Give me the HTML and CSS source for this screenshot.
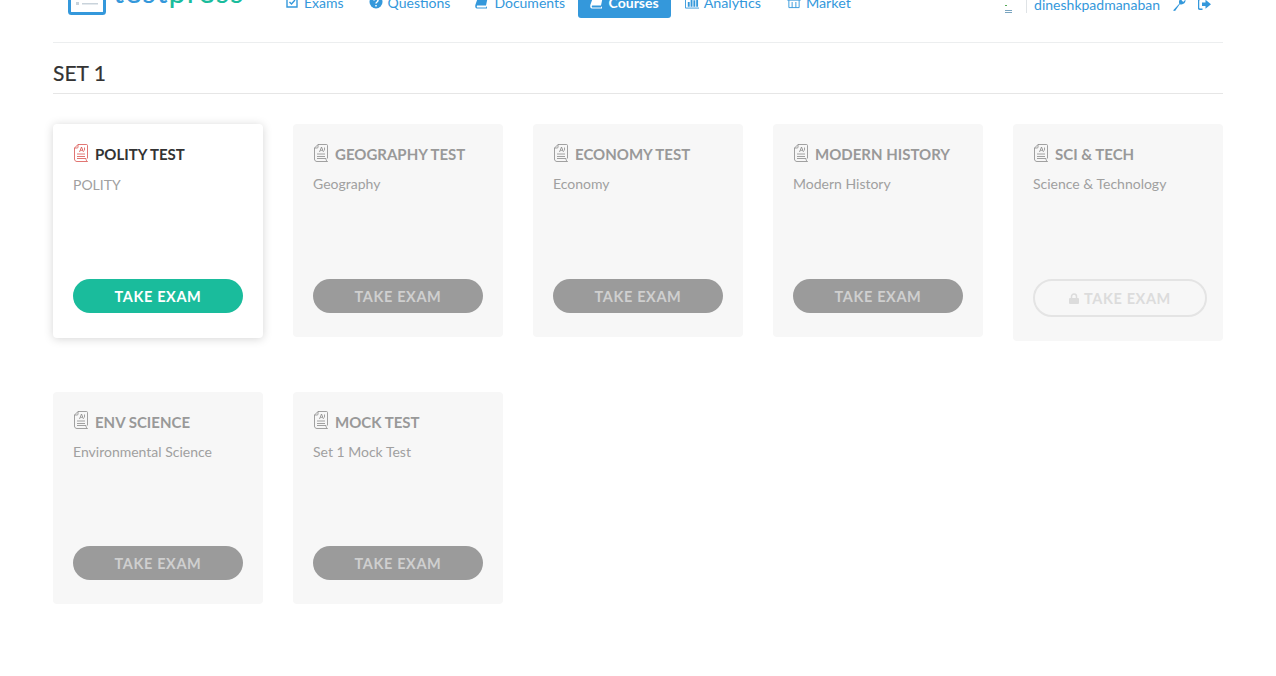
FILE: index.html
```html
<!DOCTYPE html>
<html lang="en">
<head>
<meta charset="utf-8">
<title>Testpress - Set 1</title>
<link rel="stylesheet" href="styles.css">
</head>
<body>
<svg class="defs" width="0" height="0" aria-hidden="true">
  <defs>
    <symbol id="doc" viewBox="0 0 16 18">
      <path d="M5 .5h8.500c.6 0 1 .4 1 1v13M5 .5 1.500 4v11c0 1.500 1 2.500 2.500 2.500h10.500c-1-.5-1.500-1.500-1.500-3H4M1.500 4H4.200c.5 0 .8-.3.8-.8V.5" fill="none" stroke="currentColor" stroke-width=".8"/>
      <path d="M6.500 8 8.500 3l2 5M7.300 6.300h2.500M11.500 3.500v3M4 10h8M4 12.500h8" fill="none" stroke="currentColor" stroke-width=".8"/>
    </symbol>
  </defs>
</svg>
<div class="page">
  <header class="topbar">
    <a class="logo">
      <svg class="logo-mark" viewBox="0 0 38 24" width="38" height="24"><rect x="1.500" y="-10" width="35" height="32.500" rx="2" fill="#fff" stroke="#3498db" stroke-width="3"/><rect x="8" y="11" width="3" height="3" fill="#c9d3db"/><rect x="14" y="12" width="16" height="1.500" fill="#c9d3db"/></svg>
      <span class="logo-text"><span class="logo-test">test</span><span class="logo-press">press</span></span>
    </a>
    <nav class="nav">
      <a class="nav-item"><svg class="nav-icon" viewBox="0 0 14 14"><path d="M2 2h10v10H2zM4.500 7l2 2 3.500-4" fill="none" stroke="currentColor" stroke-width="1.400"/></svg>Exams</a>
      <a class="nav-item"><svg class="nav-icon" viewBox="0 0 14 14"><circle cx="7" cy="7" r="6.500" fill="currentColor"/><path d="M5 5.500C5 3.500 9 3.500 9 5.500 9 7 7 7 7 8.500M7 10v1.500" fill="none" stroke="#fff" stroke-width="1.500"/></svg>Questions</a>
      <a class="nav-item"><svg class="nav-icon" viewBox="0 0 14 14"><path d="M3.500 1H13l-2 9.500H2.500C1.500 10.500 1.500 12.500 2.500 12.500H11L12 11V13.500H2C0 13.500 0 11 .5 9.500Z" fill="currentColor"/></svg>Documents</a>
      <a class="nav-item nav-active"><svg class="nav-icon" viewBox="0 0 14 14"><path d="M3.500 1H13l-2 9.500H2.500C1.500 10.500 1.500 12.500 2.500 12.500H11L12 11V13.500H2C0 13.500 0 11 .5 9.500Z" fill="currentColor"/></svg>Courses</a>
      <a class="nav-item nav-wide"><svg class="nav-icon" viewBox="0 0 15 14"><path d="M.5 1v12.500H15" fill="none" stroke="currentColor"/><path d="M3 7h2v5H3zM6 3h2v9H6zM9 5h2v7H9zM12 2h2v10h-2z" fill="currentColor"/></svg>Analytics</a>
      <a class="nav-item nav-wide"><svg class="nav-icon" viewBox="0 0 15 14"><path d="M2 1.500h11l1.500 3.500h-14zM2 5v8h11V5M5.500 7v6M9.500 7v6" fill="none" stroke="currentColor"/></svg>Market</a>
    </nav>
    <div class="user">
      <span class="avatar"><i class="av-a"></i><i class="av-b"></i><i class="av-c"></i></span>
      <a class="user-name">dineshkpadmanaban</a>
      <svg class="user-icon" viewBox="1 1 12.500 12.500"><path d="M1 13 7 6.500C6 3.500 8 .5 11.500 1L9.200 3.200 10.800 4.800 13 2.500C13.500 6 10.500 8 7.500 7L3 13.500Z" fill="currentColor"/></svg>
      <svg class="user-icon" viewBox="0.500 1 13 12.500"><path d="M5 2H2.500C1.500 2 1 2.500 1 3.500v7C1 11.500 1.500 12 2.500 12H5" fill="none" stroke="currentColor" stroke-width="1.500"/><path d="M4.500 5.200H8V2.500L13.500 7 8 11.500V8.800H4.500Z" fill="currentColor"/></svg>
    </div>
  </header>

  <h1 class="set-title">SET 1</h1>

  <main class="cards">
    <article class="card card-active">
      <h2 class="card-title"><svg class="doc-icon"><use href="#doc"/></svg>POLITY TEST</h2>
      <p class="card-sub">POLITY</p>
      <a class="btn btn-primary">TAKE EXAM</a>
    </article>
    <article class="card">
      <h2 class="card-title"><svg class="doc-icon"><use href="#doc"/></svg>GEOGRAPHY TEST</h2>
      <p class="card-sub">Geography</p>
      <a class="btn">TAKE EXAM</a>
    </article>
    <article class="card">
      <h2 class="card-title"><svg class="doc-icon"><use href="#doc"/></svg>ECONOMY TEST</h2>
      <p class="card-sub">Economy</p>
      <a class="btn">TAKE EXAM</a>
    </article>
    <article class="card">
      <h2 class="card-title"><svg class="doc-icon"><use href="#doc"/></svg>MODERN HISTORY</h2>
      <p class="card-sub">Modern History</p>
      <a class="btn">TAKE EXAM</a>
    </article>
    <article class="card">
      <h2 class="card-title"><svg class="doc-icon"><use href="#doc"/></svg>SCI &amp; TECH</h2>
      <p class="card-sub">Science &amp; Technology</p>
      <a class="btn btn-locked"><svg class="lock" viewBox="0 0 10 11"><path d="M2.500 5V3.500a2.500 2.500 0 0 1 5 0V5" fill="none" stroke="currentColor" stroke-width="1.500"/><rect y="5" width="10" height="6" rx="1" fill="currentColor"/></svg>TAKE EXAM</a>
    </article>
    <article class="card">
      <h2 class="card-title"><svg class="doc-icon"><use href="#doc"/></svg>ENV SCIENCE</h2>
      <p class="card-sub">Environmental Science</p>
      <a class="btn">TAKE EXAM</a>
    </article>
    <article class="card">
      <h2 class="card-title"><svg class="doc-icon"><use href="#doc"/></svg>MOCK TEST</h2>
      <p class="card-sub">Set 1 Mock Test</p>
      <a class="btn">TAKE EXAM</a>
    </article>
  </main>
</div>
</body>
</html>
```
FILE: styles.css
```css
* { box-sizing: border-box; }
html, body { margin: 0; padding: 0; background: #fff; height: 100%; overflow: hidden; }
body { font-family: Lato, "Liberation Sans", sans-serif; color: #333; }
.defs { position: absolute; }
.page { width: 1170px; margin-left: 53px; }

.topbar { display: flex; align-items: flex-start; height: 43px; border-bottom: 1px solid #eceeef; }
.logo { display: flex; align-items: flex-start; width: 204.500px; margin-left: 15px; margin-top: -9px; }
.logo-mark { margin-right: 7px; flex: none; }
.logo-text { font-size: 31px; line-height: 22px; letter-spacing: .9px; margin-top: -11px; white-space: nowrap; }
.logo-test { color: #3498db; }
.logo-press { color: #1abc9c; }
.nav { display: flex; margin-top: -13px; }
.nav-item { display: flex; align-items: center; height: 31px; padding: 0 12.500px 1px; font-size: 14px; color: #3498db; white-space: nowrap; }
.nav-icon { width: 14px; height: 14px; margin-right: 5px; flex: none; }
.nav-active { padding: 0 12px 1px; margin-right: 1px; background: #3498db; color: #fff; border-radius: 0 0 3px 3px; font-weight: 700; }
.nav-wide { padding: 0 13px 1px; font-size: 14.300px; }
.user { display: flex; align-items: center; margin-left: auto; margin-top: -4px; height: 17px; color: #3498db; font-size: 14px; }
.avatar { position: relative; width: 9px; height: 17px; margin-right: 12px; }
.avatar i { position: absolute; left: 0; display: block; height: 1px; }
.av-a { top: 3px; width: 4px; background: #ddd; }
.av-b { top: 9px; width: 2px; background: #5a5; }
.av-c { top: 14px; width: 7px; background: #7aa5c0; box-shadow: 0 2px 0 #7aa5c0; }
.user-name { border-left: 1px solid #dfe3e6; padding-left: 7px; margin-right: 13px; line-height: 17px; }
.user-icon { width: 13px; height: 13px; margin-right: 12px; }

.set-title { margin: 0 0 30px; height: 51px; padding-top: 17px; font-size: 21px; line-height: 26px; font-weight: 400; color: #333; border-bottom: 1px solid #e6e6e6; -webkit-text-stroke: .2px #333; }

.cards { display: flex; flex-wrap: wrap; align-items: flex-start; column-gap: 30px; row-gap: 51px; }
.card { width: 210px; padding: 20px 20px 24px; background: #f7f7f7; border-radius: 4px; color: #999; }
.card-active { padding-bottom: 25px; background: #fff; color: #333; box-shadow: 0 1px 10px rgba(0,0,0,.17); }
.card-title { display: flex; align-items: center; height: 20px; margin: 0; font-size: 15px; line-height: 20px; font-weight: 700; white-space: nowrap; }
.doc-icon { width: 16px; height: 18px; margin: -3px 6px 0 0; color: #8a8a8a; flex: none; }
.card-active .doc-icon { color: #d9534f; }
.card-sub { margin: 11px 0 0; height: 103.600px; font-size: 14px; line-height: 18px; color: #a0a0a0; }
.card-active .card-sub { margin-top: 12px; height: 102.600px; }
.btn { display: flex; justify-content: center; align-items: center; width: 170px; height: 34px; padding-top: 1px; border-radius: 17px; background: #9b9b9b; color: #cfcfcf; font-size: 14.500px; font-weight: 700; letter-spacing: .6px; }
.btn-primary { background: #1abc9c; color: #fff; }
.btn-locked { width: 174px; height: 38px; border-radius: 19px; background: transparent; border: 2px solid #e4e4e4; color: #dcdcdc; }
.lock { width: 10px; height: 11px; margin-right: 5px; flex: none; }
```
